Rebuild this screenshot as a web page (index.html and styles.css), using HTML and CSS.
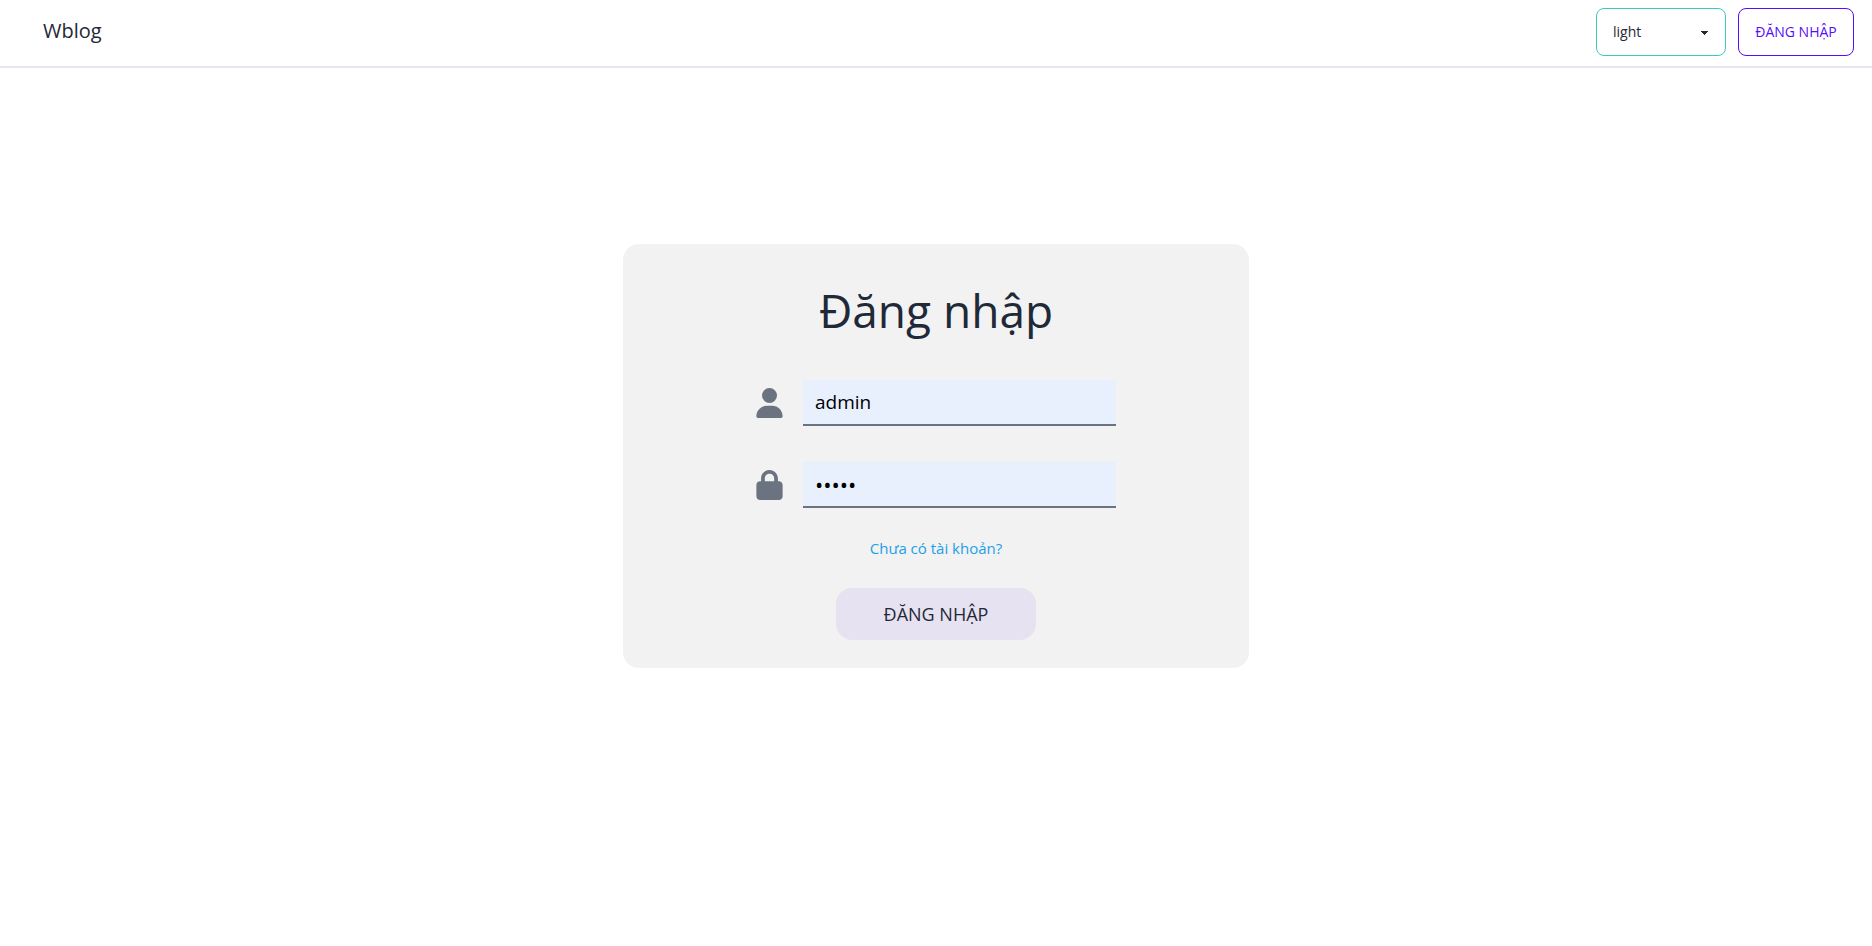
FILE: index.html
```html
<!DOCTYPE html>
<html lang="vi">
<head>
<meta charset="utf-8">
<meta name="viewport" content="width=device-width, initial-scale=1">
<title>Wblog</title>
<link rel="stylesheet" href="styles.css">
</head>
<body>
<header class="navbar">
  <a class="brand" href="#">Wblog</a>
  <div class="actions">
    <select class="theme-select" aria-label="Theme">
      <option selected>light</option>
      <option>dark</option>
    </select>
    <button class="login-button" type="button">ĐĂNG NHẬP</button>
  </div>
</header>
<main class="page">
  <form class="card">
    <h1 class="title">Đăng nhập</h1>
    <div class="field">
      <label for="username" aria-label="Username">
        <svg class="icon" viewBox="0 0 448 512" aria-hidden="true"><path d="M224 256A128 128 0 1 0 224 0a128 128 0 1 0 0 256zM178.300 304C79.800 304 0 383.800 0 482.300C0 498.700 13.300 512 29.700 512H418.300c16.400 0 29.700-13.300 29.700-29.700C448 383.800 368.200 304 269.700 304H178.300z"/></svg>
      </label>
      <input class="input" id="username" type="text" value="admin">
    </div>
    <div class="field">
      <label for="password" aria-label="Password">
        <svg class="icon" viewBox="0 0 448 512" aria-hidden="true"><path d="M144 144v48H304V144c0-44.200-35.800-80-80-80s-80 35.800-80 80zM80 192V144C80 64.500 144.500 0 224 0s144 64.500 144 144v48h16c35.300 0 64 28.700 64 64V448c0 35.300-28.700 64-64 64H64c-35.300 0-64-28.700-64-64V256c0-35.300 28.700-64 64-64H80z"/></svg>
      </label>
      <input class="input input-password" id="password" type="password" value="admin">
    </div>
    <a class="register-link" href="#">Chưa có tài khoản?</a>
    <button class="submit" type="button">ĐĂNG NHẬP</button>
  </form>
</main>
</body>
</html>
```

FILE: styles.css
```css
* {
  box-sizing: border-box;
}

body {
  margin: 0;
  background: #fff;
  color: #1f2937;
  font-family: "Segoe UI", "Open Sans", "Noto Sans", sans-serif;
  font-size: 16px;
  line-height: 24px;
}

button,
input,
select {
  font: inherit;
  color: inherit;
}

a {
  text-decoration: none;
}

.navbar {
  display: flex;
  align-items: center;
  justify-content: space-between;
  padding: 8px 18px 10px 43px;
  border-bottom: 2px solid #e5e6ee;
}

.brand {
  padding-bottom: 2px;
  color: inherit;
  font-size: 20px;
  font-weight: 500;
}

.actions {
  display: flex;
  gap: 12px;
}

.theme-select {
  width: 130px;
  height: 48px;
  padding: 0 32px 0 16px;
  appearance: none;
  border: 1px solid #37cdbe;
  border-radius: 8px;
  background-color: #fff;
  background-image:
    linear-gradient(45deg, transparent 50%, currentColor 50%),
    linear-gradient(135deg, currentColor 50%, transparent 50%);
  background-position:
    calc(100% - 20px) calc(50% + 1px),
    calc(100% - 16px) calc(50% + 1px);
  background-size: 4px 4px;
  background-repeat: no-repeat;
  font-size: 14px;
  font-weight: 500;
}

.login-button {
  width: 116px;
  height: 48px;
  padding: 0;
  border: 1px solid #570df8;
  border-radius: 8px;
  background: transparent;
  color: #570df8;
  font-size: 14px;
  font-weight: 500;
}

.page {
  display: flex;
  justify-content: center;
  padding: 176px 16px 32px;
}

.card {
  display: flex;
  flex-direction: column;
  align-items: center;
  width: 100%;
  max-width: 626px;
  padding: 36px 32px 28px;
  border-radius: 16px;
  background: #f2f2f2;
}

.title {
  margin: 0 0 40px;
  font-size: 46px;
  font-weight: 400;
  line-height: 60px;
}

.field {
  display: flex;
  align-items: center;
  gap: 20px;
  width: 100%;
  max-width: 360px;
  margin-bottom: 36px;
}

.icon {
  display: block;
  width: 27px;
  height: 30px;
  fill: #6b7280;
}

.input {
  flex: 1;
  min-width: 0;
  height: 46px;
  padding: 0 12px;
  border: 0;
  border-bottom: 2px solid #6b7280;
  border-radius: 0;
  outline: 0;
  background: #e8f0fe;
  color: #000;
  font-size: 19px;
}

.input-password {
  font-size: 22px;
}

.register-link {
  margin: -8px 0 28px;
  color: #1ca0e8;
  font-size: 15px;
}

.submit {
  width: 200px;
  height: 52px;
  border: 0;
  border-radius: 16px;
  background: #e6e2f1;
  font-size: 18px;
  font-weight: 500;
}
```
